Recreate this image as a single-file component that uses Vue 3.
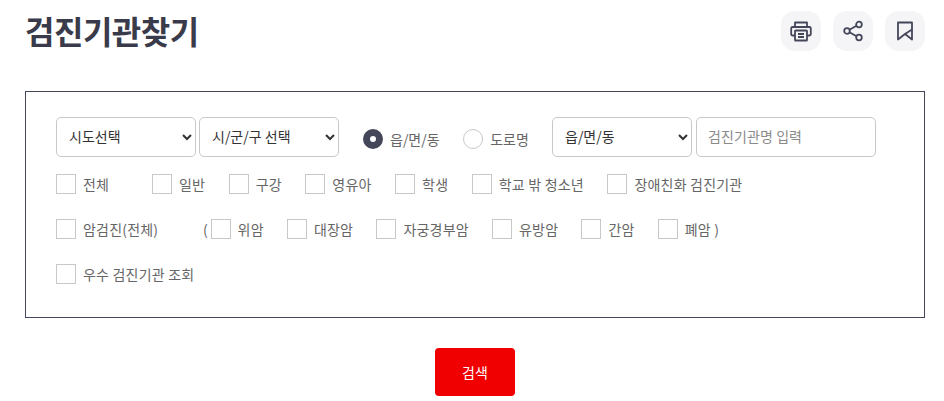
<template>
  <div class="page">
    <header class="head">
      <h1 class="title">검진기관찾기</h1>
      <div class="actions">
        <button class="icon-btn" type="button" aria-label="인쇄">
          <svg width="24" height="24" viewBox="0 0 24 24" fill="none" stroke="#44465a" stroke-width="1.8" stroke-linejoin="round">
            <path d="M6 8V3.5h12V8" />
            <path d="M6 16.5H3.6a1.4 1.4 0 0 1-1.4-1.4V9.4A1.4 1.4 0 0 1 3.6 8h16.8a1.4 1.4 0 0 1 1.4 1.4v5.7a1.4 1.4 0 0 1-1.4 1.4H18" />
            <rect x="6" y="11.5" width="12" height="10" rx="0.6" />
            <path d="M9 15h6M9 18h6" />
          </svg>
        </button>
        <button class="icon-btn" type="button" aria-label="공유">
          <svg width="24" height="24" viewBox="0 0 24 24" fill="none" stroke="#44465a" stroke-width="1.8">
            <circle cx="18" cy="5.5" r="2.8" />
            <circle cx="6" cy="12" r="2.8" />
            <circle cx="18" cy="18.5" r="2.8" />
            <path d="M8.5 10.7l7-3.9M8.5 13.3l7 3.9" />
          </svg>
        </button>
        <button class="icon-btn" type="button" aria-label="즐겨찾기">
          <svg width="24" height="24" viewBox="0 0 24 24" fill="none" stroke="#44465a" stroke-width="1.8" stroke-linejoin="round">
            <path d="M5 3.5h14v17L12 15l-7 5.5z" />
            <path d="M19 10.5L12 15" />
          </svg>
        </button>
      </div>
    </header>

    <section class="box">
      <div class="top-row">
        <select class="field sel"><option>시도선택</option></select>
        <select class="field sel"><option>시/군/구 선택</option></select>
        <div class="radios">
          <label class="radio"><span class="dot on"></span>읍/면/동</label>
          <label class="radio"><span class="dot"></span>도로명</label>
        </div>
        <select class="field sel"><option>읍/면/동</option></select>
        <input class="field name" type="text" placeholder="검진기관명 입력" />
      </div>

      <div class="check-row">
        <label v-for="c in targets" :key="c" class="check"><span class="box-mark"></span>{{ c }}</label>
      </div>

      <div class="check-row cancer-row">
        <label class="check cancer-all"><span class="box-mark"></span>암검진(전체)</label>
        <span class="paren">(</span>
        <label v-for="c in cancers" :key="c" class="check"><span class="box-mark"></span>{{ c }}</label>
      </div>

      <div class="check-row">
        <label class="check"><span class="box-mark"></span>우수 검진기관 조회</label>
      </div>
    </section>

    <div class="submit">
      <button class="search" type="button">검색</button>
    </div>
  </div>
</template>

<script setup>
const targets = ['전체', '일반', '구강', '영유아', '학생', '학교 밖 청소년', '장애친화 검진기관']
const cancers = ['위암', '대장암', '자궁경부암', '유방암', '간암', '폐암 )']
</script>

<style>
body {
  background: #fff;
}
</style>

<style scoped>
.page {
  width: 944px;
  height: 401px;
  overflow: hidden;
  box-sizing: border-box;
  padding: 11px 19px 0 25px;
  font-family: "Noto Sans CJK KR", "Noto Sans", sans-serif;
}

.head {
  display: flex;
  justify-content: space-between;
  align-items: flex-start;
  height: 80px;
}

.title {
  margin: 0;
  font-size: 32px;
  line-height: 38px;
  font-weight: 700;
  letter-spacing: -0.5px;
  color: #3a3b4a;
}

.actions {
  display: flex;
  gap: 12px;
}

.icon-btn {
  width: 40px;
  height: 40px;
  padding: 0;
  border: 0;
  border-radius: 14px;
  background: #f5f5f7;
  display: flex;
  align-items: center;
  justify-content: center;
}

.box {
  box-sizing: border-box;
  width: 900px;
  height: 227px;
  border: 1px solid #44465a;
  padding: 25px 30px 0;
}

.top-row {
  display: flex;
  align-items: center;
  height: 40px;
}

.field {
  box-sizing: border-box;
  height: 40px;
  border: 1px solid #c8c8c8;
  border-radius: 5px;
  background: #fff;
  font-family: inherit;
  font-size: 14px;
  color: #333;
}

.sel {
  width: 140px;
  padding: 0 0 2px 8px;
  margin-right: 3px;
}

.name {
  width: 180px;
  margin-left: 1px;
  padding: 0 11px 2px;
  outline: none;
  letter-spacing: 0.1px;
}

.name::placeholder {
  color: #8a8a8a;
  opacity: 1;
}

.radios {
  display: flex;
  gap: 23.5px;
  margin-left: 21px;
  width: 189px;
  flex: none;
}

.radio {
  display: flex;
  align-items: center;
  gap: 7px;
  font-size: 14px;
  color: #666;
  padding-top: 4px;
}

.dot {
  box-sizing: border-box;
  width: 20px;
  height: 20px;
  border: 1px solid #c8c8c8;
  border-radius: 50%;
  background: #fff;
}

.dot.on {
  border: 7px solid #44465a;
}

.check-row {
  display: flex;
  align-items: center;
  gap: 23.5px;
  height: 20px;
  margin-top: 25px;
}

.top-row + .check-row {
  margin-top: 17px;
}

.cancer-row {
  gap: 23.2px;
}

.check {
  display: flex;
  align-items: center;
  gap: 7px;
  font-size: 14px;
  letter-spacing: 0.2px;
  color: #666;
  white-space: nowrap;
}

.check-row:nth-of-type(2) .check:first-child {
  width: 72.5px;
}

.box-mark {
  box-sizing: border-box;
  flex: none;
  width: 20px;
  height: 20px;
  border: 1px solid #c8c8c8;
  background: #fff;
}

.cancer-all {
  width: 147px;
}

.paren {
  margin-left: -23.2px;
  margin-right: -23.2px;
  width: 7.6px;
  font-size: 14px;
  color: #666;
}

.submit {
  display: flex;
  justify-content: center;
  margin-top: 30px;
}

.search {
  width: 80px;
  height: 48px;
  border: 0;
  border-radius: 4px;
  background: #f00000;
  color: #fff;
  font-family: inherit;
  font-size: 14px;
}
</style>
